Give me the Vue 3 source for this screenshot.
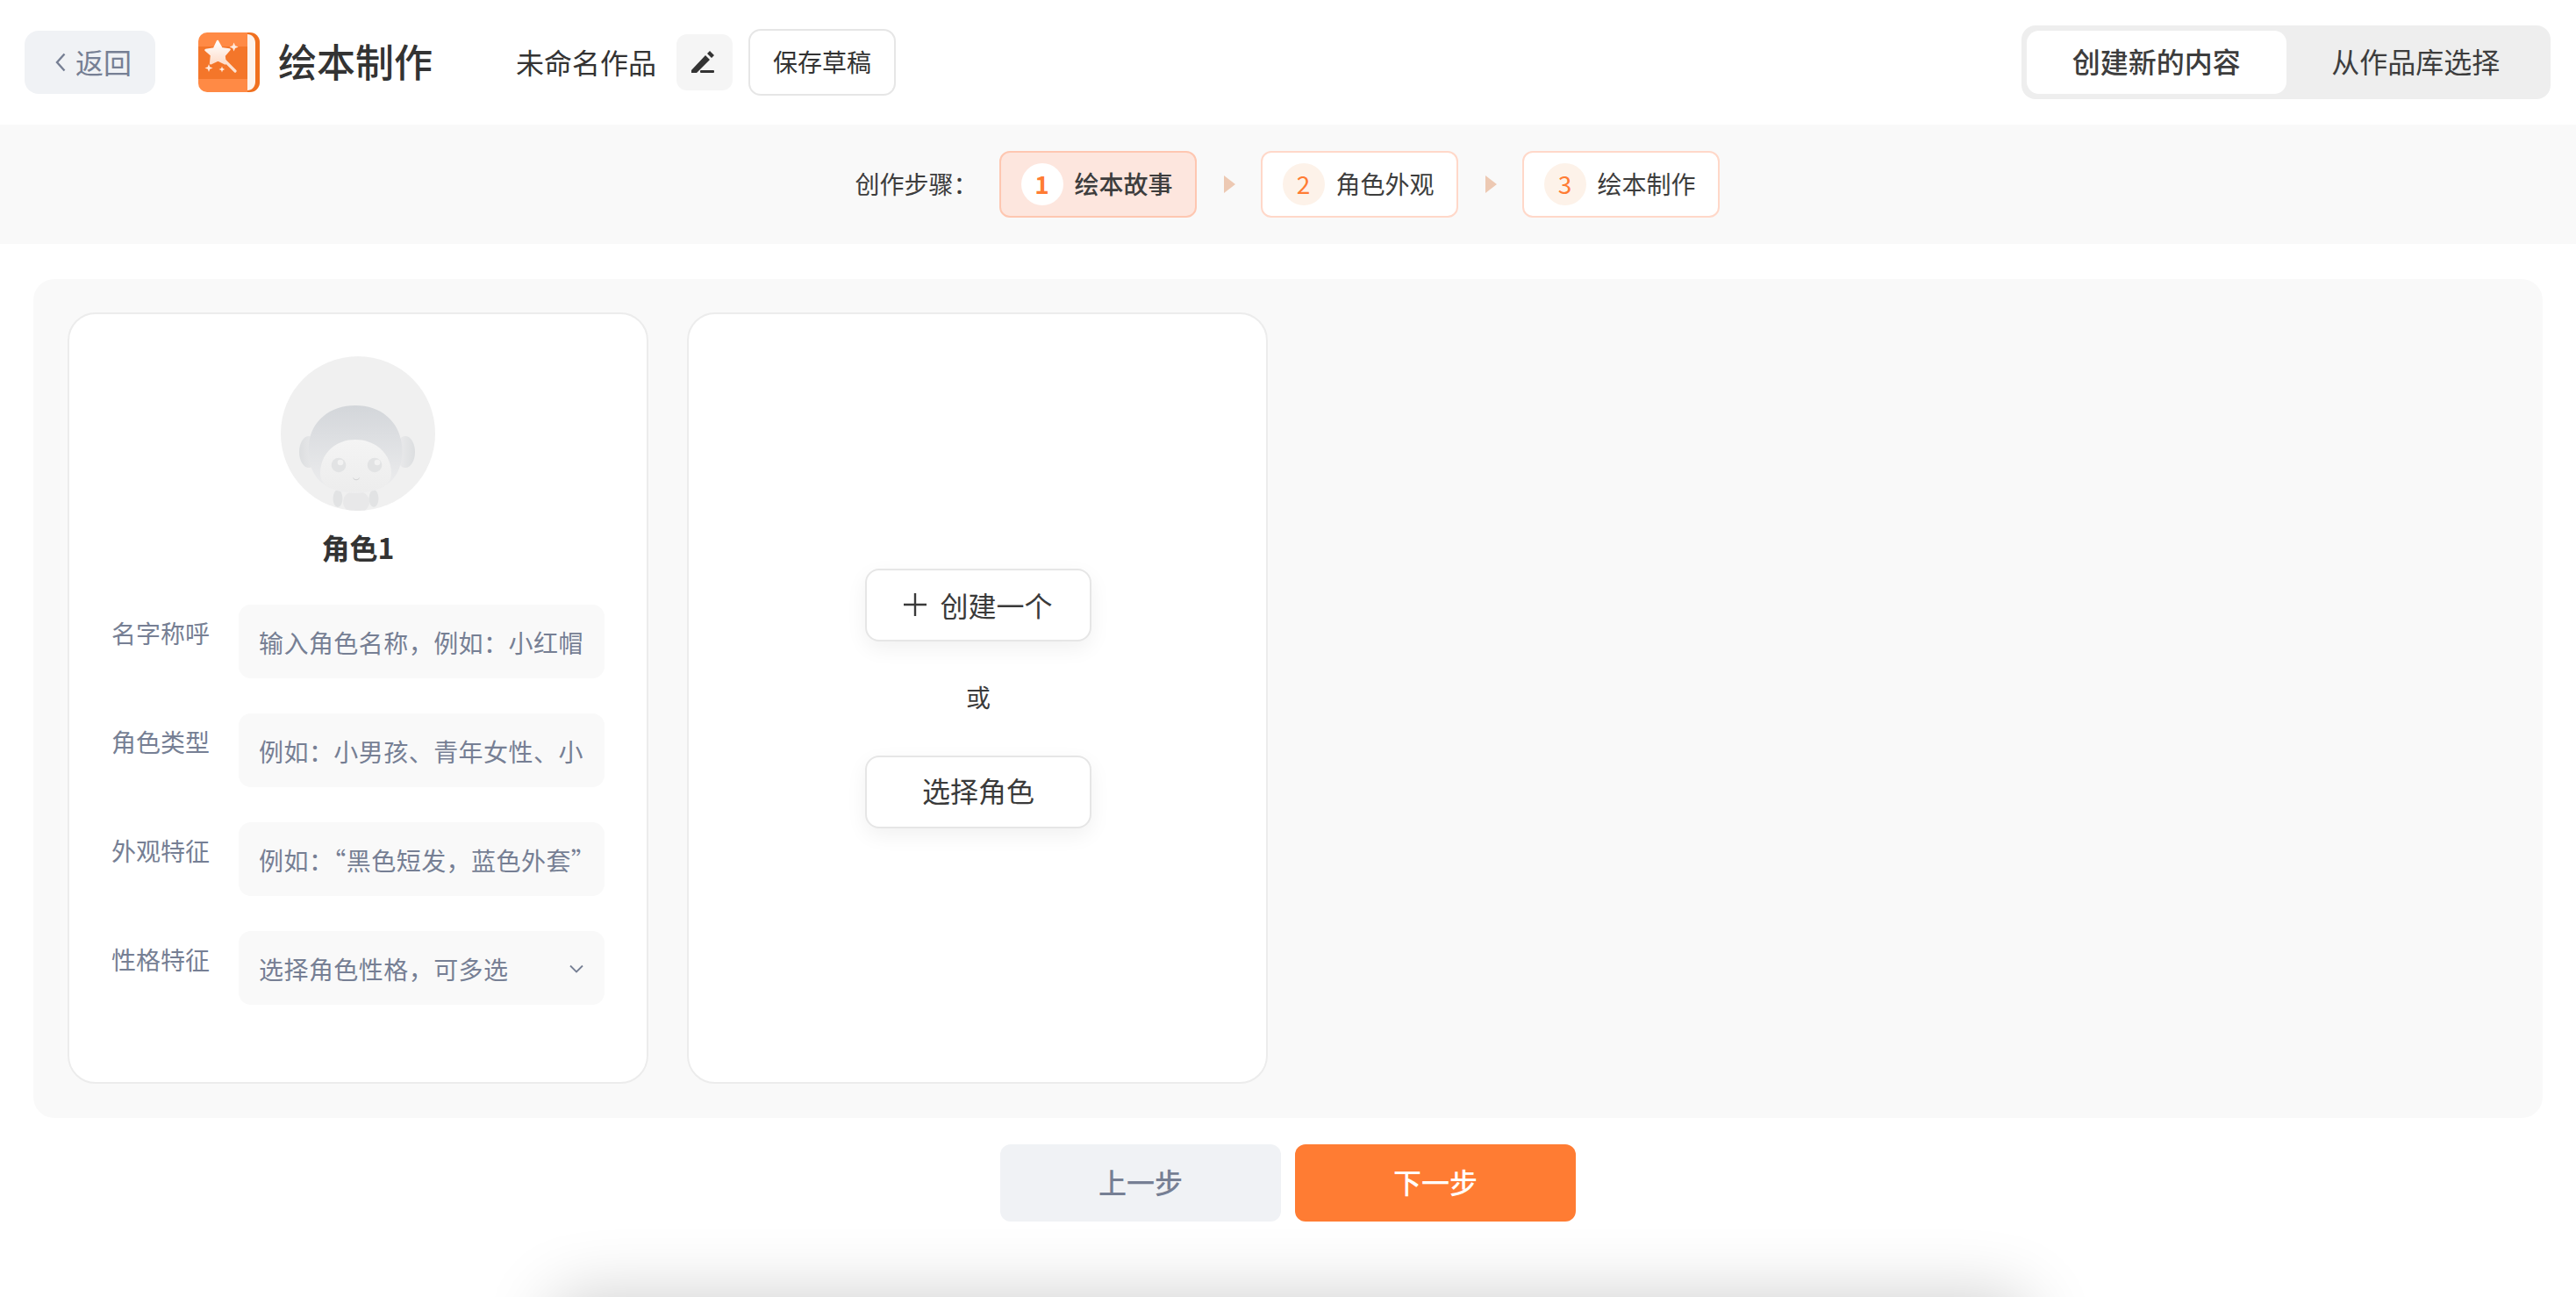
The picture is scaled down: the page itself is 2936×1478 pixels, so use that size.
<script setup>
const steps = [
  { n: 1, label: '绘本故事', active: true },
  { n: 2, label: '角色外观', active: false },
  { n: 3, label: '绘本制作', active: false }
]
const fields = [
  { label: '名字称呼', placeholder: '输入角色名称，例如：小红帽' },
  { label: '角色类型', placeholder: '例如：小男孩、青年女性、小动物' },
  { label: '外观特征', placeholder: '例如：“黑色短发，蓝色外套”' }
]
</script>

<template>
  <div class="page">
    <header class="top">
      <button class="back">
        <svg class="back-ico" viewBox="0 0 12 22" width="12" height="22" fill="none">
          <path d="M10.5 1.500 2 11l8.500 9.500" stroke="#767f94" stroke-width="2.400" />
        </svg>
        <span class="back-text">返回</span>
      </button>
      <svg class="logo" viewBox="0 0 70 68" width="70" height="68">
        <defs>
          <linearGradient id="star" x1="0" y1="0" x2="0" y2="1">
            <stop offset="0" stop-color="#ffffff" />
            <stop offset="1" stop-color="#fddcc9" />
          </linearGradient>
          <clipPath id="cover"><path d="M10 0h46v68H10A10 10 0 0 1 0 58V10A10 10 0 0 1 10 0z" /></clipPath>
        </defs>
        <path d="M50 0h9a11 11 0 0 1 11 11v46a11 11 0 0 1-11 11h-9z" fill="#f0701f" />
        <path d="M50 2h6c5 0 9 4 9 10v44c0 6-4 10-9 10h-6z" fill="#fdf3ec" />
        <g clip-path="url(#cover)">
          <rect width="56" height="68" fill="#ff8a45" />
          <rect y="16" width="56" height="37" fill="#f4762a" />
        </g>
        <path d="M22 10l4.500 8.200 9 1.300-6 6.800 1.200 9.200-8.200-4.200-8.400 4 1-9.500L8.500 20l9.500-1.500z" fill="url(#star)" stroke="url(#star)" stroke-width="2.500" stroke-linejoin="round" />
        <path d="M30 32l12 12" stroke="#fde0cf" stroke-width="3.200" stroke-linecap="round" />
        <path d="M40.600 11.500l1.400 3.600 3.600 1.400-3.600 1.400-1.400 3.600-1.400-3.600-3.600-1.400 3.600-1.400zM12 36l1.200 3.300 3.300 1.200-3.300 1.200L12 45l-1.200-3.300-3.300-1.200 3.300-1.200zM27 38.500l.9 2.600 2.600.9-2.600.9-.9 2.600-.9-2.600-2.600-.9 2.600-.9z" fill="#ffeadd" />
      </svg>
      <h1 class="title">绘本制作</h1>
      <span class="work-name">未命名作品</span>
      <button class="edit">
        <svg viewBox="0 0 64 64" width="64" height="64" fill="#333">
          <path d="M17 41v3h6l15-15-5-5zM35 22l3-3 5 5-3 3z" />
          <rect x="27" y="41" width="16" height="3" rx="1" />
        </svg>
      </button>
      <button class="draft">保存草稿</button>
      <div class="tabs">
        <div class="tab on">创建新的内容</div>
        <div class="tab">从作品库选择</div>
      </div>
    </header>

    <section class="stepbar">
      <span class="step-title">创作步骤：</span>
      <template v-for="(s, i) in steps" :key="s.n">
        <div class="step" :class="{ on: s.active }">
          <span class="num">{{ s.n }}</span>
          <span class="step-text">{{ s.label }}</span>
        </div>
        <i v-if="i < steps.length - 1" class="arrow"></i>
      </template>
    </section>

    <main class="panel">
      <div class="card form-card">
        <div class="avatar">
          <svg viewBox="0 0 176 176" width="176" height="176">
            <defs>
              <linearGradient id="hood" x1="0" y1="0" x2="0" y2="1">
                <stop offset="0" stop-color="#d3d6da" />
                <stop offset="1" stop-color="#eeeeef" />
              </linearGradient>
              <linearGradient id="ear" x1="0" y1="0" x2="1" y2="0">
                <stop offset="0" stop-color="#dcdee0" />
                <stop offset="1" stop-color="#ececed" />
              </linearGradient>
              <linearGradient id="ear2" x1="1" y1="0" x2="0" y2="0">
                <stop offset="0" stop-color="#dcdee0" />
                <stop offset="1" stop-color="#ececed" />
              </linearGradient>
              <linearGradient id="face" x1="0" y1="0" x2="0" y2="1">
                <stop offset="0" stop-color="#f4f4f4" />
                <stop offset="1" stop-color="#ededed" />
              </linearGradient>
              <clipPath id="round"><circle cx="88" cy="88" r="88" /></clipPath>
            </defs>
            <circle cx="88" cy="88" r="88" fill="#f0f0f0" />
            <g clip-path="url(#round)">
              <ellipse cx="86" cy="166" rx="15" ry="13" fill="#e8e8e9" />
              <ellipse cx="65" cy="162" rx="5.500" ry="10" fill="#e2e3e4" />
              <ellipse cx="106" cy="162" rx="5.500" ry="10" fill="#e2e3e4" />
              <ellipse cx="32" cy="109" rx="11" ry="18" fill="url(#ear)" />
              <ellipse cx="142" cy="109" rx="11" ry="18" fill="url(#ear2)" />
              <path d="M32 101C34 74 56 56 85 56s50 18 53 45c2 22-4 54-53 55-48-1-55-33-53-55z" fill="url(#hood)" />
              <path d="M85 95c24 0 41 17 41 38 0 15-12 21-41 21-28 0-40-6-40-21 0-21 16-38 40-38z" fill="url(#face)" />
              <circle cx="66" cy="124" r="8.300" fill="#e2e3e4" />
              <circle cx="107" cy="124" r="8.300" fill="#e2e3e4" />
              <circle cx="68" cy="121" r="3.300" fill="#f2f2f2" />
              <circle cx="110" cy="121" r="3.300" fill="#f2f2f2" />
              <path d="M82.500 138.500c1 3 6 3 7 0" fill="none" stroke="#c9cacc" stroke-width=".8" />
            </g>
          </svg>
        </div>
        <div class="role-name">角色1</div>
        <div class="fields">
          <label v-for="f in fields" :key="f.label" class="row">
            <span class="lab">{{ f.label }}</span>
            <input class="ctrl" type="text" :placeholder="f.placeholder" />
          </label>
          <div class="row">
            <span class="lab">性格特征</span>
            <div class="ctrl select">
              <span>选择角色性格，可多选</span>
              <svg viewBox="0 0 16 10" width="16" height="10" fill="none">
                <path d="M1 1.500l7 7 7-7" stroke="#767f94" stroke-width="1.800" />
              </svg>
            </div>
          </div>
        </div>
      </div>

      <div class="card add-card">
        <button class="pick">
          <svg viewBox="0 0 26 26" width="26" height="26" fill="none">
            <path d="M13 0v26M0 13h26" stroke="#3a3a3a" stroke-width="2.400" />
          </svg>
          <span>创建一个</span>
        </button>
        <div class="or">或</div>
        <button class="pick">选择角色</button>
      </div>
    </main>

    <footer class="foot">
      <button class="nav prev">上一步</button>
      <button class="nav next">下一步</button>
    </footer>

    <div class="edge-shadow"></div>
  </div>
</template>

<style>
html, body { margin: 0; background: #fff; }
</style>

<style scoped>
.page {
  position: relative;
  width: 2936px;
  height: 1478px;
  overflow: hidden;
  background: #fff;
  color: #333;
  font-family: "Noto Sans CJK SC", "Noto Sans", sans-serif;
  font-size: 28px;
}
button { font-family: inherit; cursor: pointer; }
.top {
  height: 142px;
  box-sizing: border-box;
  padding: 0 29px 0 28px;
  display: flex;
  align-items: center;
}
.back {
  width: 149px;
  height: 72px;
  box-sizing: border-box;
  padding: 0 0 0 35px;
  display: flex;
  align-items: center;
  gap: 11px;
  border: 0;
  border-radius: 16px;
  background: #f0f2f5;
  color: #767f94;
  font-size: 32px;
}
.back-text { padding-bottom: 3px; }
.logo { margin-left: 49px; flex: none; }
.title {
  margin: 0 0 0 21px;
  width: 178px;
  padding-bottom: 4px;
  font-size: 44px;
  font-weight: 500;
  line-height: 60px;
  color: #333;
}
.work-name { margin-left: 93px; width: 160px; padding-bottom: 3px; font-size: 32px; color: #333; }
.edit {
  margin-left: 23px;
  width: 64px;
  height: 64px;
  padding: 0;
  border: 0;
  border-radius: 12px;
  background: #f5f5f5;
}
.edit svg { display: block; }
.draft {
  margin-left: 18px;
  width: 168px;
  height: 76px;
  padding: 0 0 3px;
  border: 2px solid #e6e6e6;
  border-radius: 14px;
  background: #fff;
  color: #333;
  font-size: 28px;
}
.tabs {
  margin-left: auto;
  width: 603px;
  height: 84px;
  box-sizing: border-box;
  padding: 6px;
  display: flex;
  border-radius: 16px;
  background: #eee;
}
.tab {
  flex: 1;
  box-sizing: border-box;
  padding-bottom: 5px;
  display: flex;
  align-items: center;
  justify-content: center;
  border-radius: 14px;
  font-size: 32px;
  color: #3d3d3d;
}
.tab.on { background: #fff; font-weight: 500; }
.stepbar {
  height: 136px;
  box-sizing: border-box;
  padding-right: 2px;
  display: flex;
  align-items: center;
  justify-content: center;
  background: #f9f9f9;
  color: #3d3d3d;
}
.step-title { width: 140px; margin-right: 24px; padding-bottom: 2px; }
.step-text { padding-bottom: 2px; }
.step {
  width: 225px;
  height: 76px;
  box-sizing: border-box;
  padding-left: 23px;
  display: flex;
  align-items: center;
  gap: 13px;
  border: 2px solid #ffd8c9;
  border-radius: 12px;
  background: #fff;
}
.step.on { background: #fde6de; border-color: #fec7b1; font-weight: 500; }
.num {
  width: 48px;
  height: 48px;
  box-sizing: border-box;
  padding-bottom: 2px;
  display: flex;
  align-items: center;
  justify-content: center;
  border-radius: 50%;
  background: #fdf2e9;
  color: #ff7c33;
}
.step.on .num { background: #fff; font-weight: 700; }
.arrow {
  width: 0;
  height: 0;
  margin: 0 29px 0 31px;
  border-style: solid;
  border-width: 10px 0 10px 13px;
  border-color: transparent transparent transparent #edc9b3;
}
.panel {
  margin: 40px 38px 0;
  height: 956px;
  box-sizing: border-box;
  padding: 38px 39px 39px;
  display: flex;
  gap: 44px;
  border-radius: 24px;
  background: #f9f9f9;
}
.card {
  width: 662px;
  box-sizing: border-box;
  border: 2px solid #ececec;
  border-radius: 32px;
  background: #fff;
}
.form-card {
  padding: 48px 48px 0;
  display: flex;
  flex-direction: column;
}
.avatar { width: 176px; height: 176px; align-self: center; }
.avatar svg { display: block; }
.role-name {
  margin: 21px 0 46px;
  line-height: 40px;
  text-align: center;
  font-size: 32px;
  font-weight: 600;
  color: #333;
}
.fields { display: flex; flex-direction: column; gap: 40px; }
.row { display: flex; gap: 33px; }
.lab {
  width: 112px;
  flex: none;
  padding-top: 12px;
  line-height: 40px;
  color: #767f94;
}
.ctrl {
  flex: 1;
  min-width: 0;
  height: 84px;
  box-sizing: border-box;
  padding: 2px 24px 0 23px;
  border: 0;
  border-radius: 14px;
  outline: 0;
  background: #f9f9f9;
  color: #767f94;
  font: inherit;
  letter-spacing: 0.45px;
}
.ctrl::placeholder { color: #767f94; opacity: 1; }
.select {
  display: flex;
  align-items: center;
  justify-content: space-between;
}
.add-card {
  padding-left: 2px;
  display: flex;
  flex-direction: column;
  align-items: center;
  justify-content: center;
}
.pick {
  width: 258px;
  height: 83px;
  padding: 0;
  display: flex;
  align-items: center;
  justify-content: center;
  gap: 15px;
  border: 2px solid #e6e6e6;
  border-radius: 16px;
  background: #fff;
  box-shadow: 0 8px 24px rgba(0, 0, 0, 0.06);
  color: #3a3a3a;
  font-size: 32px;
}
.or + .pick { padding-bottom: 4px; }
.or { margin: 44px 0 48px; line-height: 38px; color: #3a3a3a; }
.foot {
  margin-top: 30px;
  display: flex;
  justify-content: center;
  gap: 16px;
}
.nav {
  width: 320px;
  height: 88px;
  padding: 0 0 4px;
  border: 0;
  border-radius: 12px;
  font-size: 32px;
  font-weight: 500;
}
.prev { background: #f0f2f5; color: #767f94; }
.next { background: #ff7c33; color: #fff; }
.edge-shadow {
  position: absolute;
  left: 630px;
  top: 1478px;
  width: 1680px;
  height: 120px;
  border-radius: 20px;
  box-shadow: 0 0 80px rgba(0, 0, 0, 0.2);
}
</style>
